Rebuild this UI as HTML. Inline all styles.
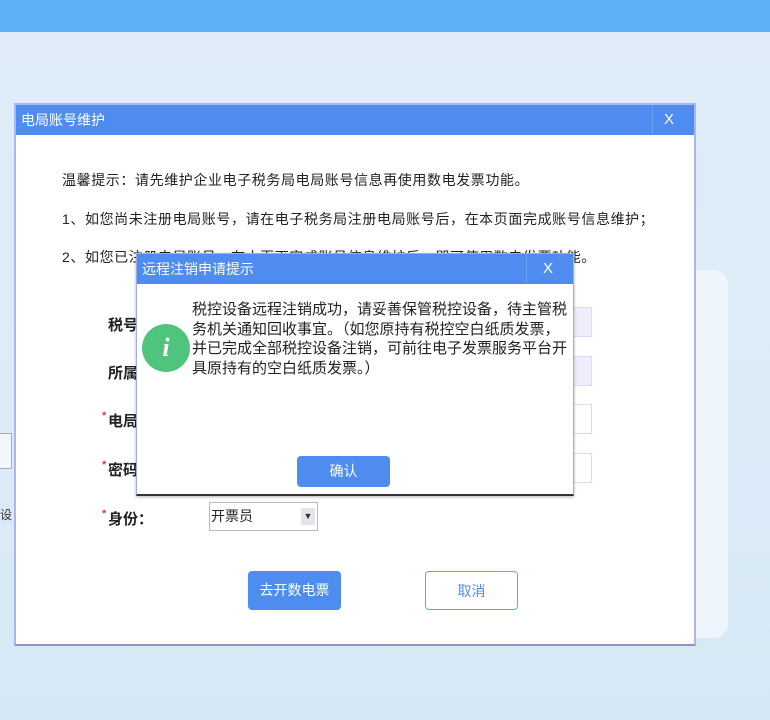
<!DOCTYPE html>
<html><head><meta charset="utf-8"><style>
*{margin:0;padding:0;box-sizing:border-box}
body{width:770px;height:720px;overflow:hidden;position:relative;background:linear-gradient(180deg,#e0edf9 0%,#dcebf8 60%,#d6e8f6 100%);font-family:"Liberation Sans","Noto Sans CJK SC",sans-serif;color:#222}
.abs{position:absolute}
.top{left:0;top:0;width:770px;height:32px;background:#5eb0f7}
.rp{left:680px;top:270px;width:48px;height:368px;background:#eef5fc;border-radius:14px}
.dlg{left:14px;top:103px;width:682px;height:543px;background:#fff;border:2px solid #a9b6f2;border-bottom-color:#8d95b8}
.tb{left:0;top:0;width:100%;height:30px;background:#4f8cf0;color:#fff;font-size:14px;line-height:30px;padding-left:5px}
.x{color:#fff;font-size:15px}
.t{font-size:14px;left:46px;white-space:nowrap;letter-spacing:0.6px}
.lab{font-size:15px;font-weight:bold;left:92px}
.star{color:#e33;font-size:11px}
.inp{left:200px;width:376px;height:30px;border:1px solid #d7dcf5}
.btn{border-radius:4px;font-size:14px;text-align:center;line-height:38px;height:39px;width:93px}
.pop{left:136px;top:253px;width:438px;height:243px;background:#fff;border:1px solid #9cb0e0;border-bottom:2px solid #333;box-shadow:0 1px 3px rgba(0,0,0,.3)}
.pl{white-space:nowrap;font-size:15px;letter-spacing:0;line-height:19.5px}
</style></head><body>
<div class="abs top"></div>
<div class="abs rp"></div>
<div class="abs" style="left:0;top:433px;width:12px;height:36px;background:#f3f6fa;border:1px solid #aab;border-left:none"></div>
<div class="abs" style="left:0;top:506px;font-size:12px;color:#333">设</div>
<div class="abs dlg">
  <div class="abs tb">电局账号维护</div>
  <div class="abs" style="left:636px;top:0;width:1px;height:30px;background:#6d9ff2"></div>
  <div class="abs x" style="left:648px;top:6px">X</div>
  <div class="abs t" style="top:65px">温馨提示：请先维护企业电子税务局电局账号信息再使用数电发票功能。</div>
  <div class="abs t" style="top:104px">1、如您尚未注册电局账号，请在电子税务局注册电局账号后，在本页面完成账号信息维护；</div>
  <div class="abs t" style="top:142px">2、如您已注册电局账号，在本页面完成账号信息维护后，即可使用数电发票功能。</div>
  <div class="abs lab" style="top:209px">税号</div>
  <div class="abs inp" style="top:202px;background:#eeeefc"></div>
  <div class="abs lab" style="top:257px">所属</div>
  <div class="abs inp" style="top:251px;background:#eeeefc"></div>
  <div class="abs lab" style="top:305px"><span class="star abs" style="left:-6px;top:0">*</span>电局</div>
  <div class="abs inp" style="top:299px"></div>
  <div class="abs lab" style="top:354px"><span class="star abs" style="left:-6px;top:0">*</span>密码</div>
  <div class="abs inp" style="top:348px"></div>
  <div class="abs lab" style="top:403px"><span class="star abs" style="left:-6px;top:0">*</span>身份：</div>
  <div class="abs" style="left:193px;top:397px;width:109px;height:29px;border:1px solid #bbb;font-size:14px;line-height:27px;padding-left:1px">开票员<span class="abs" style="right:2px;top:5px;width:14px;height:17px;background:#e4e4ea;font-size:9px;line-height:17px;text-align:center;color:#333">▼</span></div>
  <div class="abs btn" style="left:232px;top:466px;background:#4f8cf0;color:#fff">去开数电票</div>
  <div class="abs btn" style="left:409px;top:466px;border:1px solid #6d9ff2;color:#4f8cf0;background:#fff">取消</div>
</div>
<div class="abs pop">
  <div class="abs tb" style="font-size:14px">远程注销申请提示</div>
  <div class="abs" style="left:389px;top:0;width:1px;height:29px;background:#6d9ff2"></div>
  <div class="abs x" style="left:406px;top:6px">X</div>
  <div class="abs" style="left:5px;top:70px;width:48px;height:48px;border-radius:50%;background:#4ec47c;color:#fff;font:italic bold 26px/48px 'Liberation Serif',serif;text-align:center">i</div>
  <div class="abs" style="left:55px;top:46px">
    <div class="pl">税控设备远程注销成功，请妥善保管税控设备，待主管税</div>
    <div class="pl">务机关通知回收事宜。（如您原持有税控空白纸质发票，</div>
    <div class="pl">并已完成全部税控设备注销，可前往电子发票服务平台开</div>
    <div class="pl">具原持有的空白纸质发票。）</div>
  </div>
  <div class="abs" style="left:160px;top:202px;width:93px;height:31px;background:#4f8cf0;border-radius:4px;color:#fff;font-size:14px;line-height:31px;text-align:center">确认</div>
</div>
</body></html>
